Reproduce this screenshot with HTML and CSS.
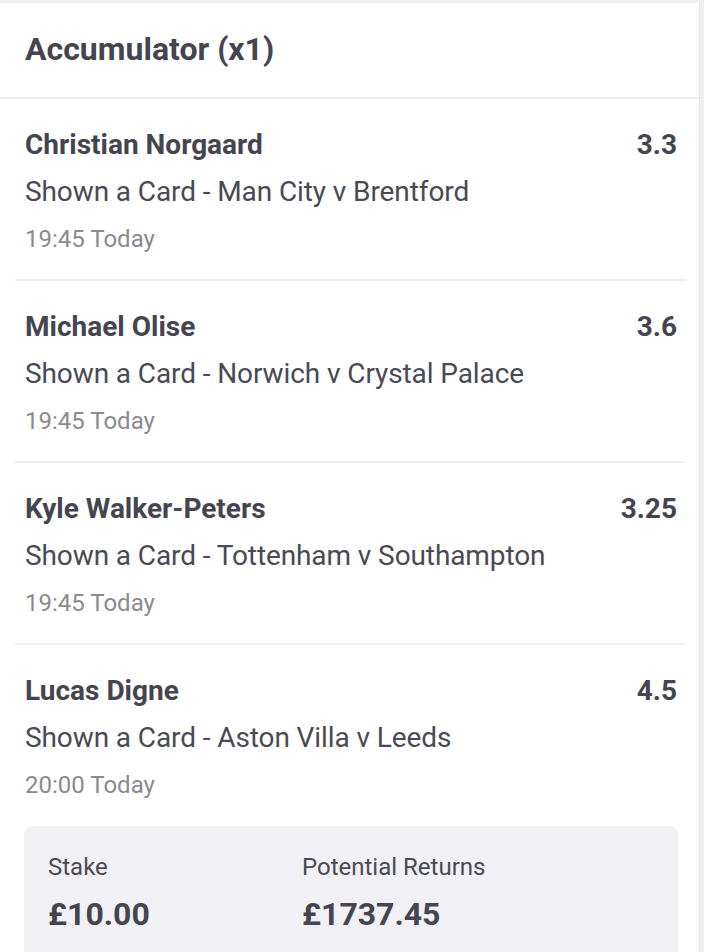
FILE: index.html
```html
<!DOCTYPE html>
<html>
<head>
<meta charset="utf-8">
<link rel="stylesheet" href="styles.css">
</head>
<body>
<div class="page">
  <div class="card">
    <div class="header">Accumulator (x1)</div>
    <div class="list">
      <div class="item">
        <div class="row"><span class="name">Christian Norgaard</span><span class="odds">3.3</span></div>
        <div class="market">Shown a Card - Man City v Brentford</div>
        <div class="time">19:45 Today</div>
      </div>
      <div class="item">
        <div class="row"><span class="name">Michael Olise</span><span class="odds">3.6</span></div>
        <div class="market">Shown a Card - Norwich v Crystal Palace</div>
        <div class="time">19:45 Today</div>
      </div>
      <div class="item">
        <div class="row"><span class="name">Kyle Walker-Peters</span><span class="odds">3.25</span></div>
        <div class="market">Shown a Card - Tottenham v Southampton</div>
        <div class="time">19:45 Today</div>
      </div>
      <div class="item last">
        <div class="row"><span class="name">Lucas Digne</span><span class="odds">4.5</span></div>
        <div class="market">Shown a Card - Aston Villa v Leeds</div>
        <div class="time">20:00 Today</div>
      </div>
    </div>
    <div class="summary">
      <div class="col stake">
        <div class="label">Stake</div>
        <div class="value">£10.00</div>
      </div>
      <div class="col">
        <div class="label">Potential Returns</div>
        <div class="value">£1737.45</div>
      </div>
    </div>
  </div>
</div>
</body>
</html>
```
FILE: styles.css
```css
* { box-sizing: border-box; }
html, body { margin: 0; padding: 0; }
body {
  background: #f0f0f2;
  font-family: Roboto, "Liberation Sans", sans-serif;
  color: #45454f;
  width: 704px;
  height: 952px;
  overflow: hidden;
}
.page {
  padding-top: 3px;
  padding-right: 4px;
}
.card {
  background: #fff;
  border-right: 1px solid #e4e4e8;
  height: 949px;
}
.header {
  height: 96px;
  padding: 27px 0 0 25px;
  font-size: 32px;
  line-height: 38px;
  font-weight: 700;
  border-bottom: 2px solid #efeff1;
}
.list {
  padding: 0 13px 0 15px;
}
.item {
  height: 182px;
  padding: 30px 9px 0 10px;
  border-bottom: 2px solid #efeff1;
}
.item.last { border-bottom: none; height: 181px; }
.row {
  display: flex;
  justify-content: space-between;
  align-items: baseline;
}
.name, .odds {
  font-size: 28px;
  font-weight: 700;
  line-height: 32px;
}
.market {
  margin-top: 14px;
  font-size: 28px;
  line-height: 34px;
  color: #4a4a54;
  letter-spacing: -0.1px;
}
.time {
  margin-top: 16px;
  font-size: 24px;
  line-height: 28px;
  color: #8a8a90;
}
.summary {
  margin: 0 21px 0 24px;
  background: #f1f1f5;
  border-radius: 9px 9px 0 0;
  height: 130px;
  padding: 27px 24px 0 24px;
  display: flex;
}
.col.stake { width: 254px; }
.label {
  font-size: 24px;
  line-height: 28px;
  color: #4a4a54;
}
.value {
  margin-top: 14px;
  font-size: 32px;
  font-weight: 700;
  line-height: 38px;
}
```
